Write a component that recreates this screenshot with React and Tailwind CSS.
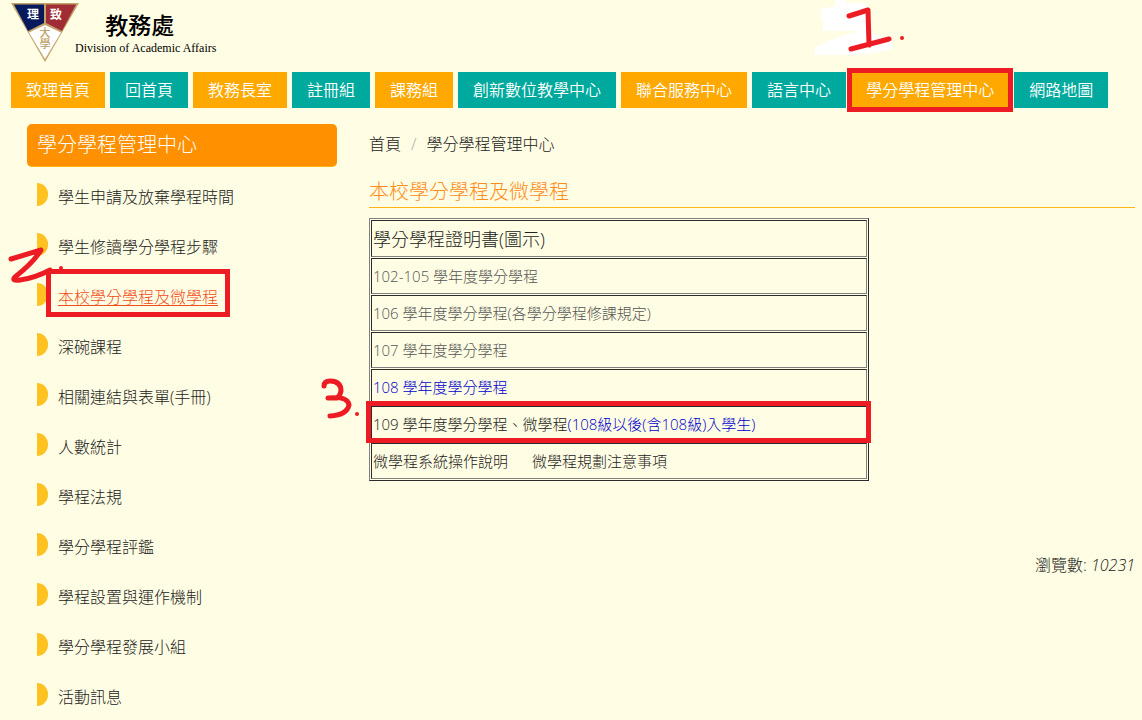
import React from 'react';

const navItems = [
  { label: '致理首頁', href: '#home' },
  { label: '回首頁', href: '#index' },
  { label: '教務長室', href: '#dean' },
  { label: '註冊組', href: '#register' },
  { label: '課務組', href: '#course' },
  { label: '創新數位教學中心', href: '#digital' },
  { label: '聯合服務中心', href: '#service' },
  { label: '語言中心', href: '#language' },
  { label: '學分學程管理中心', href: '#program', marked: true },
  { label: '網路地圖', href: '#sitemap' },
];

const sideItems = [
  { label: '學生申請及放棄學程時間' },
  { label: '學生修讀學分學程步驟' },
  { label: '本校學分學程及微學程', active: true },
  { label: '深碗課程' },
  { label: '相關連結與表單(手冊)' },
  { label: '人數統計' },
  { label: '學程法規' },
  { label: '學分學程評鑑' },
  { label: '學程設置與運作機制' },
  { label: '學分學程發展小組' },
  { label: '活動訊息' },
];

const cellClass = 'relative h-9 border border-t-[#2b2b2b] border-l-[#2b2b2b] border-r-[#808080] border-b-[#808080] p-px';

const Logo = () => (
  <svg className="h-[60px] w-[68px]" viewBox="0 0 68 60" role="img" aria-label="致理">
    <path d="M0 0H68L34 59Z" fill="#c1a36a" />
    <path d="M3 1.500H33V20L17 28Z" fill="#06195c" />
    <path d="M35 1.500H65L51 28L35 20Z" fill="#a02c35" />
    <path d="M34 22L50 29.500L34 56L18 29.500Z" fill="#fff" />
    <g fontFamily="Noto Sans CJK TC, sans-serif">
      <text x="22" y="16" fontSize="12" fontWeight="700" fill="#fff" textAnchor="middle">理</text>
      <text x="45" y="16" fontSize="12" fontWeight="700" fill="#fff" textAnchor="middle">致</text>
      <text x="34" y="24" fontSize="11" fontWeight="500" fill="#c1a36a" writingMode="vertical-rl">大學</text>
    </g>
  </svg>
);

const NumberOne = () => (
  <svg className="absolute -top-[72px] -left-[36px] h-[58px] w-[94px]" viewBox="0 0 94 58" fill="none" aria-hidden="true">
    <path d="M20 0H32L30 3H51V18H56V33L64 36L77 38V49L60 53L40 55H0V47L26 36L45 31H8V20H6V9L20 6Z" fill="#fff" />
    <path d="M34 16L53 10L54 45M36 49L74 39" stroke="#ed1c24" strokeWidth="5" strokeLinecap="round" strokeLinejoin="round" />
    <circle cx="87" cy="38" r="2" fill="#ed1c24" />
  </svg>
);

const NumberTwo = () => (
  <svg className="absolute -top-[40px] -left-[50px] h-[40px] w-[56px]" viewBox="0 0 56 40" fill="none" aria-hidden="true">
    <path d="M3 14L33 5Q26 17 7 32Q3 36 12 35Q27 33 42 25" stroke="#ed1c24" strokeWidth="5" strokeLinecap="round" strokeLinejoin="round" />
    <circle cx="53" cy="23" r="2" fill="#ed1c24" />
  </svg>
);

const NumberThree = () => (
  <svg className="absolute -top-[30px] -left-[51px] h-[46px] w-[40px]" viewBox="0 0 40 46" fill="none" aria-hidden="true">
    <path d="M3 9Q3 4 9 4Q20 4 20 14Q19 19 16 21H7Q27 19 28 28Q26 38 9 39" stroke="#ed1c24" strokeWidth="5" strokeLinecap="round" strokeLinejoin="round" />
    <circle cx="36" cy="37" r="2" fill="#ed1c24" />
  </svg>
);

const Header = () => (
  <header>
    <div className="flex h-[69px] items-start pt-[3px] pl-[11px]">
      <Logo />
      <div className="-ml-1 pt-2 text-center text-black">
        <h1 className="pr-3 font-['Noto_Sans_CJK_TC',sans-serif] text-[23px] leading-[26px] font-medium">教務處</h1>
        <p className="font-['Liberation_Serif',serif] text-xs leading-[22px] font-normal">Division of Academic Affairs</p>
      </div>
    </div>
    <nav className="pt-[3px] pl-[11px]">
      <ul className="flex flex-wrap gap-[5px]">
        {navItems.map((item, i) => (
          <li key={item.label} className="relative">
            <a
              href={item.href}
              className={`block px-[15px] py-1.5 text-base leading-6 font-[350] text-white ${i % 2 === 0 ? 'bg-[#ffa800]' : 'bg-[#00a99d]'}`}
            >
              {item.label}
            </a>
            {item.marked && (
              <>
                <span className="pointer-events-none absolute -inset-1 border-[5px] border-[#ed1c24]" />
                <NumberOne />
              </>
            )}
          </li>
        ))}
      </ul>
    </nav>
  </header>
);

const Sidebar = () => (
  <aside className="w-[310px] shrink-0">
    <h2 className="rounded-[5px] border-b border-[#ffb515] bg-[#ff9000] px-2.5 py-[6px] text-xl leading-[30px] text-white">
      學分學程管理中心
    </h2>
    <ul className="pt-[5px] pl-2.5">
      {sideItems.map((item) => (
        <li key={item.label} className="relative flex h-[50px] items-center">
          <span className="mb-[5px] h-[23px] w-[11px] rounded-r-full bg-[#ffc221]" />
          <span className="relative ml-2.5">
            <a href="#list" className={item.active ? 'text-[#f04e1a] underline underline-offset-2' : ''}>
              {item.label}
            </a>
            {item.active && (
              <>
                <span className="pointer-events-none absolute -inset-x-3 -top-4 -bottom-2 border-[5px] border-[#ed1c24]" />
                <NumberTwo />
              </>
            )}
          </span>
        </li>
      ))}
    </ul>
  </aside>
);

const ProgramTable = () => (
  <table className="w-[500px] border-separate border-spacing-px border border-t-[#808080] border-l-[#808080] border-r-[#2b2b2b] border-b-[#2b2b2b] text-[15px] leading-6">
    <tbody>
      <tr>
        <td className={`${cellClass} h-[37px] text-lg leading-6`}>學分學程證明書(圖示)</td>
      </tr>
      <tr>
        <td className={cellClass}><a href="#102" className="text-[#555]">102-105 學年度學分學程</a></td>
      </tr>
      <tr>
        <td className={cellClass}><a href="#106" className="text-[#555]">106 學年度學分學程(各學分學程修課規定)</a></td>
      </tr>
      <tr>
        <td className={cellClass}><a href="#107" className="text-[#555]">107 學年度學分學程</a></td>
      </tr>
      <tr>
        <td className={cellClass}><a href="#108" className="text-[#0000cd]">108 學年度學分學程</a></td>
      </tr>
      <tr>
        <td className={cellClass}>
          <a href="#109">109 學年度學分學程、微學程<span className="text-[#0000cd]">(108級以後(含108級)入學生)</span></a>
          <span className="pointer-events-none absolute -top-1.5 -right-[5px] -bottom-0.5 -left-1.5 border-[5px] border-[#ed1c24]" />
          <NumberThree />
        </td>
      </tr>
      <tr>
        <td className={cellClass}>
          <a href="#manual">微學程系統操作說明</a>
          <a href="#notice" className="ml-6">微學程規劃注意事項</a>
        </td>
      </tr>
    </tbody>
  </table>
);

const App = () => {
  return (
    <div className="min-h-screen overflow-hidden bg-[#fffde3] font-['Open_Sans','Noto_Sans_CJK_TC',sans-serif] text-base leading-6 font-light text-[#222]">
      <Header />
      <div className="flex gap-8 pt-4 pr-[7px] pl-[27px]">
        <Sidebar />
        <main className="min-w-0 flex-1">
          <nav className="pt-2" aria-label="路徑">
            <ol className="flex">
              <li><a href="#index">首頁</a></li>
              <li className="px-2.5 text-[#aaa]">/</li>
              <li><a href="#program">學分學程管理中心</a></li>
            </ol>
          </nav>
          <h2 className="mt-[21px] mb-2.5 border-b border-[#ffb515] text-xl leading-[30px] text-[#ff8c1a]">本校學分學程及微學程</h2>
          <ProgramTable />
          <p className="mt-[72px] text-right">瀏覽數: <em>10231</em></p>
        </main>
      </div>
    </div>
  );
};

export default App;
